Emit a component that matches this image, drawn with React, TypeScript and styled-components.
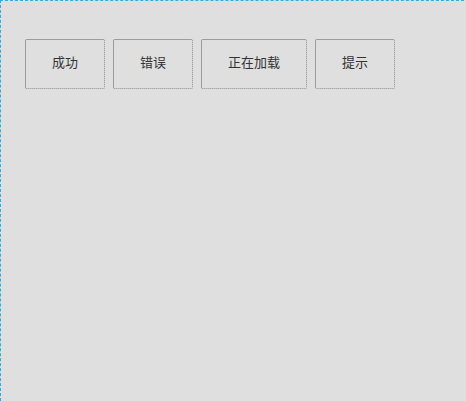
import React from 'react';
import styled, { createGlobalStyle } from 'styled-components';

const GlobalStyle = createGlobalStyle`
  html, body {
    margin: 0;
    padding: 0;
    background: #dfdfdf;
    font-family: "Liberation Sans", "Noto Sans CJK SC", sans-serif;
  }
`;

const Stage = styled.div`
  box-sizing: border-box;
  width: 464px;
  height: 401px;
  padding: 38px 24px;
  border-top: 1px dashed #27b0e6;
  border-left: 1px dashed #27b0e6;
  background: #dfdfdf;
`;

const Toolbar = styled.div`
  display: flex;
  gap: 8px;
`;

const Button = styled.button`
  box-sizing: border-box;
  min-width: 80px;
  height: 50px;
  padding: 0 26px 3px;
  background: #dfdfdf;
  color: #333;
  font-family: "Liberation Sans", "Noto Sans CJK SC", sans-serif;
  font-size: 13px;
  line-height: 16px;
  border-top: 1px solid #9c9c9c;
  border-left: 1px solid #9c9c9c;
  border-right: 1px dotted #8c8c8c;
  border-bottom: 1px dotted #8c8c8c;
  border-radius: 2px;
  cursor: pointer;
`;

const labels = ['成功', '错误', '正在加载', '提示'];

function App() {
  return (
    <>
      <GlobalStyle />
      <Stage>
        <Toolbar>
          {labels.map((l) => (
            <Button key={l}>{l}</Button>
          ))}
        </Toolbar>
      </Stage>
    </>
  );
}

export default App;
